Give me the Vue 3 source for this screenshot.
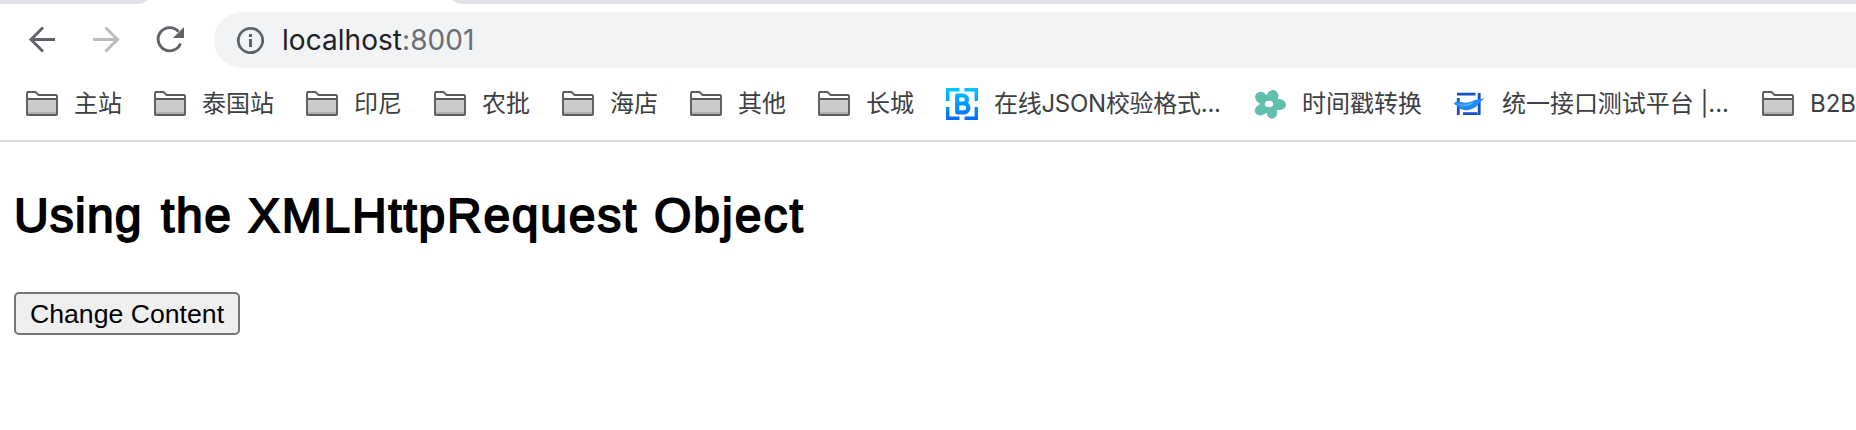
<script setup>
const bookmarks = [
  { label: '主站', icon: 'folder', w: 48 },
  { label: '泰国站', icon: 'folder', w: 72 },
  { label: '印尼', icon: 'folder', w: 48 },
  { label: '农批', icon: 'folder', w: 48 },
  { label: '海店', icon: 'folder', w: 48 },
  { label: '其他', icon: 'folder', w: 48 },
  { label: '长城', icon: 'folder', w: 48 },
  { label: '在线JSON校验格式...', icon: 'json', w: 228 },
  { label: '时间戳转换', icon: 'flower', w: 120 },
  { label: '统一接口测试平台 |...', icon: 'platform', w: 228 },
  { label: 'B2B', icon: 'folder', w: 60 },
]
</script>

<template>
  <div class="window">
    <svg class="tabs" width="1856" height="4" viewBox="0 0 1856 4">
      <path d="M0 0H148Q143 4 138 4H0ZM452 0Q457 4 463 4H1856V0Z" fill="#dee1e6" />
    </svg>
    <div class="toolbar">
      <svg class="nav" width="214" height="56" viewBox="0 0 214 56" fill="none" stroke-width="2.9">
        <path d="M55 27.5H31M43 15.5L31 27.5L43 39.5" stroke="#5f6368" />
        <path d="M93 27.5H117M105.500 15.500L117.500 27.500L105.500 39.500" stroke="#babcbe" />
        <path d="M180.500 31.500A11.600 11.600 0 1 1 178.500 19.600" stroke="#5f6368" />
        <path d="M184 15V26H173Z" fill="#5f6368" />
      </svg>
      <div class="address">
        <svg class="info" width="28" height="28" viewBox="0 0 28 28">
          <circle cx="14.5" cy="14.500" r="12.200" fill="none" stroke="#5f6368" stroke-width="2.800" />
          <path d="M13 8h3v3h-3zM13 13h3v8h-3z" fill="#5f6368" />
        </svg>
        <span class="url">localhost<span class="port">:8001</span></span>
      </div>
    </div>
    <nav class="bookmarks">
      <div v-for="b in bookmarks" :key="b.label" class="bookmark">
        <svg v-if="b.icon === 'folder'" class="icon" width="32" height="32" viewBox="0 0 32 32">
          <path d="M1 9H31V26Q31 27 30 27H2Q1 27 1 26Z" fill="#ccc" />
          <path d="M2 24H30V26H2Z" fill="#b0b0b0" />
          <path d="M2 8V5H9L12 8H30V10H2Z" fill="#fff" />
          <path d="M1 11V5Q1 4 2 4H9.500L12.500 7H30Q31 7 31 8V26Q31 27 30 27H2Q1 27 1 26Z M1 11H31" fill="none" stroke="#5c5c5c" stroke-width="1.900" />
        </svg>
        <svg v-else-if="b.icon === 'json'" class="icon" width="32" height="32" viewBox="0 0 32 32">
          <defs>
            <linearGradient id="json-blue" x1="0" y1="0" x2="0" y2="32" gradientUnits="userSpaceOnUse">
              <stop stop-color="#00c8ff" /><stop offset="1" stop-color="#0868ff" />
            </linearGradient>
          </defs>
          <path d="M1.700 13V1.700H13.500M18.500 1.700H30.300V13M30.300 19V30.300H18.500M13.500 30.300H1.700V19" fill="none" stroke="url(#json-blue)" stroke-width="3.400" />
          <path d="M11.200 7.500H17A4 4 0 0 1 17 15.500H11.200ZM11.200 15.500H18A4.400 4.400 0 0 1 18 24.300H11.200Z" fill="none" stroke="url(#json-blue)" stroke-width="4.200" stroke-linejoin="round" />
        </svg>
        <svg v-else-if="b.icon === 'flower'" class="icon" width="32" height="32" viewBox="0 0 32 32">
          <g fill="#61bfae">
            <ellipse cx="18.500" cy="8.500" rx="5.800" ry="6.500" transform="rotate(18 18.500 8.500)" />
            <ellipse cx="7.500" cy="10" rx="5.800" ry="6.800" transform="rotate(-48 7.500 10)" />
            <ellipse cx="7.500" cy="21.500" rx="5.500" ry="7" transform="rotate(60 7.500 21.500)" />
            <ellipse cx="18" cy="24" rx="5.300" ry="6.700" />
            <ellipse cx="25" cy="16.500" rx="7" ry="5.500" transform="rotate(8 25 16.500)" />
            <circle cx="15.500" cy="16" r="9.500" />
          </g>
          <ellipse cx="15" cy="16" rx="4.200" ry="3.200" fill="#fff" />
        </svg>
        <svg v-else class="icon" width="32" height="32" viewBox="0 0 32 32">
          <path d="M3 6.200H21.500M25.200 5V27M9 25.700H23.500M4.300 10V27" fill="none" stroke="#1450c8" stroke-width="2.800" />
          <path d="M0 15.500Q2 12.500 5 13.500Q10 15.500 16 14Q23 10.500 31 10.500Q26 13 24 17Q18 23 10 22Q4 21 3 17.500Q1 17.500 0 15.500Z" fill="#2588fa" />
          <path d="M2 15Q10 19 20 13.500Q17 18 11 18Q5 18 2 15Z" fill="#58b8ff" />
        </svg>
        <svg class="label" :width="b.w" height="36">
          <text x="0" y="26" :textLength="b.w > 200 ? b.w - 1 : undefined">{{ b.label }}</text>
        </svg>
      </div>
    </nav>
    <main class="page">
      <h2><span class="w1">Using</span><span class="w2">the</span><span class="w3">XMLHttpRequest</span><span class="w4">Object</span></h2>
      <button type="button">Change Content</button>
    </main>
  </div>
</template>

<style>
body { margin: 0; background: #fff; overflow: hidden; }
</style>

<style scoped>
.window { width: 100%; height: 430px; overflow: hidden; background: #fff; }
.tabs { display: block; }
.toolbar { display: flex; height: 56px; padding-top: 8px; }
.nav { flex: none; }
.address {
  flex: 1; display: flex; align-items: center; margin-right: -40px; padding-left: 22px;
  background: #f1f3f4; border-radius: 28px;
}
.info { margin-right: 18px; }
.url { font: 28px/56px Inter, sans-serif; color: #202124; letter-spacing: 0.05px; }
.port { color: #6b6e72; }
.bookmarks {
  display: flex; gap: 32px; height: 72px; padding-left: 26px; box-sizing: content-box;
  align-items: center; border-bottom: 2px solid #dadcdc;
}
.bookmark { display: flex; flex: none; align-items: center; gap: 16px; height: 36px; }
.icon { flex: none; }
.label { flex: none; overflow: visible; font: 24px Inter, "Noto Sans CJK SC", sans-serif; fill: #3c4043; }
.page { padding: 44px 14px 0; }
h2 {
  display: flex; margin: 0; height: 60px; color: #000; white-space: nowrap;
  font: 400 48px/60px "Liberation Sans", sans-serif; -webkit-text-stroke: 1.8px #000;
}
.w1 { width: 147px; letter-spacing: 1.2px; }
.w2 { width: 87px; letter-spacing: 1.6px; }
.w3 { width: 406px; letter-spacing: 1.75px; }
.w4 { letter-spacing: 2px; }
button {
  display: block; width: 226px; height: 43px; margin-top: 47px; padding: 0;
  border: 2px solid #767676; border-radius: 5px; background: #efefef; color: #000;
  font: 26.667px/36px "Liberation Sans", sans-serif;
  margin-top: 46px;
}
</style>
